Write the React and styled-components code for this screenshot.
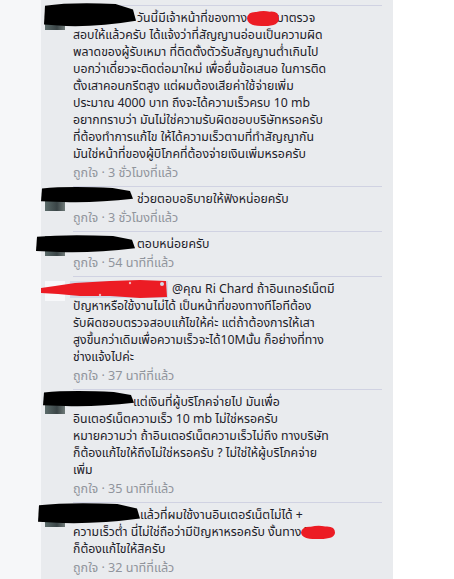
import React from "react";
import styled, { createGlobalStyle } from "styled-components";

const GlobalStyle = createGlobalStyle`
  html, body {
    margin: 0;
    padding: 0;
    background: #f6f7f9;
  }
  body {
    font-family: Tahoma, "Noto Sans Thai", "Noto Sans", "DejaVu Sans", sans-serif;
  }
`;

const Page = styled.div`
  display: flex;
  min-height: 579px;
`;

const Gutter = styled.div`
  width: 41px;
  flex-shrink: 0;
`;

const Panel = styled.div`
  width: 352px;
  flex-shrink: 0;
  background: #e9ebee;
  padding: 5px 11px 0 4px;
  box-sizing: border-box;
`;

const Blank = styled.div`
  flex: 1;
  background: #ffffff;
`;

const Comment = styled.div`
  position: relative;
  display: flex;
`;

const Avatar = styled.div`
  width: 20px;
  height: 20px;
  margin-top: 5px;
  margin-right: 8px;
  flex-shrink: 0;
  background: ${(p) => p.$bg || "linear-gradient(90deg, #5b6b6a, #3a4446 60%, #6f7a78)"};
`;

const Body = styled.div`
  flex: 1;
  border-top: 1px solid #d0d2e2;
  padding: 4px 0 4px;
  font-size: 12.3px;
  line-height: 17px;
  color: #1d2129;
  white-space: nowrap;
`;

const Line = styled.div``;

const Name = styled.span`
  display: inline-block;
  width: ${(p) => p.$w}px;
  height: 17px;
  vertical-align: top;
  margin-left: ${(p) => (p.$tag ? "-3px" : "0")};
  margin-right: 4px;
  background: ${(p) => (p.$tag ? "#d3d9e7" : "transparent")};
`;

const Hidden = styled.span`
  position: relative;
  display: inline-block;
`;

const Scribble = styled.svg`
  position: absolute;
  left: ${(p) => p.$x}px;
  top: ${(p) => p.$y}px;
  pointer-events: none;
`;

const Meta = styled.div`
  margin-top: 2px;
  font-size: 12.6px;
  color: #90949c;
`;

const BlackBlob = ({ x, y, w, h }) => (
  <Scribble $x={x} $y={y} width={w} height={h} viewBox={`0 0 ${w} ${h}`}>
    <path
      d={`M2 ${h * 0.15} Q${w * 0.3} 0 ${w * 0.78} 2 L${w - 3} ${h * 0.3} L${w} ${h * 0.75} Q${w * 0.6} ${h} ${w * 0.25} ${h - 1} L1 ${h * 0.9} Z`}
      fill="#000"
    />
  </Scribble>
);

const RedBlob = ({ x, y, w, h }) => (
  <Scribble $x={x} $y={y} width={w} height={h} viewBox={`0 0 ${w} ${h}`}>
    <path
      d={`M1 ${h * 0.5} Q${w * 0.05} ${h * 0.1} ${w * 0.3} ${h * 0.12} Q${w * 0.5} 0 ${w * 0.7} ${h * 0.1} Q${w - 1} ${h * 0.05} ${w - 1} ${h * 0.5} Q${w - 1} ${h - 1} ${w * 0.55} ${h - 1} Q${w * 0.05} ${h} 1 ${h * 0.5} Z`}
      fill="#ec1c24"
    />
  </Scribble>
);

const TagScribble = () => (
  <Scribble $x={-5} $y={3} width={128} height={20} viewBox="0 0 128 20">
    <path
      d="M1 9 L15 7 L35 4 L70 2 L100 1 L126 2 L127 18 L100 19 L70 17 L40 17 L18 15 L1 14 Z"
      fill="#ec1c24"
    />
    <circle cx="122" cy="5" r="2" fill="#d3d9e7" />
    <circle cx="60" cy="16" r="1.2" fill="#f2b6ba" />
    <circle cx="90" cy="4" r="1.2" fill="#f2b6ba" />
  </Scribble>
);

const Tot = ({ blob }) => (
  <Hidden>
    TOT
    <RedBlob {...blob} />
  </Hidden>
);

const comments = [
  {
    lines: [
      <>
        วันนี้มีเจ้าหน้าที่ของทาง <Tot blob={{ x: -4, y: 0, w: 34, h: 17 }} /> มาตรวจ
      </>,
      "สอบให้แล้วครับ ได้แจ้งว่าที่สัญญานอ่อนเป็นความผิด",
      "พลาดของผู้รับเหมา ที่ติดตั้งตัวรับสัญญานต่ำเกินไป",
      "บอกว่าเดี๋ยวจะติดต่อมาใหม่ เพื่อยื่นข้อเสนอ ในการติด",
      "ตั้งเสาคอนกรีตสูง แต่ผมต้องเสียค่าใช้จ่ายเพิ่ม",
      "ประมาณ 4000 บาท ถึงจะได้ความเร็วครบ 10 mb",
      "อยากทราบว่า มันไม่ใช่ความรับผิดชอบบริษัทหรอครับ",
      "ที่ต้องทำการแก้ไข ให้ได้ความเร็วตามที่ทำสัญญากัน",
      "มันใช่หน้าที่ของผู้บิโภคที่ต้องจ่ายเงินเพิ่มหรอครับ",
    ],
    nameW: 60,
    time: "3 ชั่วโมงที่แล้ว",
    black: { x: -2, y: -3, w: 93, h: 25 },
  },
  {
    lines: ["ช่วยตอบอธิบายให้ฟังหน่อยครับ"],
    nameW: 60,
    time: "3 ชั่วโมงที่แล้ว",
    black: { x: -5, y: 0, w: 93, h: 17 },
  },
  {
    lines: ["ตอบหน่อยครับ"],
    nameW: 60,
    time: "54 นาทีที่แล้ว",
    black: { x: -10, y: 3, w: 100, h: 19 },
  },
  {
    lines: [
      "@คุณ Ri Chard ถ้าอินเทอร์เน็ตมี",
      "ปัญหาหรือใช้งานไม่ได้ เป็นหน้าที่ของทางทีโอทีต้อง",
      "รับผิดชอบตรวจสอบแก้ไขให้ค่ะ แต่ถ้าต้องการให้เสา",
      "สูงขึ้นกว่าเดิมเพื่อความเร็วจะได้10Mนั้น ก็อย่างที่ทาง",
      "ช่างแจ้งไปค่ะ",
    ],
    nameW: 98,
    tag: true,
    avatar: "#f7f8fa",
    time: "37 นาทีที่แล้ว",
  },
  {
    lines: [
      "แต่เงินที่ผู้บริโภคจ่ายไป มันเพื่อ",
      "อินเตอร์เน็ตความเร็ว 10 mb ไม่ใช่หรอครับ",
      "หมายความว่า ถ้าอินเตอร์เน็ตความเร็วไม่ถึง ทางบริษัท",
      "ก็ต้องแก้ไขให้ถึงไม่ใช่หรอครับ ? ไม่ใช่ให้ผู้บริโภคจ่าย",
      "เพิ่ม",
    ],
    nameW: 56,
    time: "35 นาทีที่แล้ว",
    black: { x: -3, y: 1, w: 92, h: 17 },
  },
  {
    lines: [
      "แล้วที่ผมใช้งานอินเตอร์เน็ตไม่ได้ +",
      <>
        ความเร็วต่ำ นี่ไม่ใช่ถือว่ามีปัญหาหรอครับ งั้นทาง{" "}
        <Tot blob={{ x: -4, y: 1, w: 36, h: 15 }} />
      </>,
      "ก็ต้องแก้ไขให้สิครับ",
    ],
    nameW: 63,
    time: "32 นาทีที่แล้ว",
    black: { x: -8, y: 0, w: 103, h: 22 },
  },
];

const App = () => (
  <>
    <GlobalStyle />
    <Page>
      <Gutter />
      <Panel>
        {comments.map((c, i) => (
          <Comment key={i}>
            <Avatar $bg={c.avatar} />
            <Body>
              {c.lines.map((l, j) => (
                <Line key={j}>
                  {j === 0 && <Name $w={c.nameW} $tag={c.tag} />}
                  {l}
                </Line>
              ))}
              <Meta>ถูกใจ · {c.time}</Meta>
            </Body>
            {c.black && <BlackBlob {...c.black} />}
            {c.tag && <TagScribble />}
          </Comment>
        ))}
      </Panel>
      <Blank />
    </Page>
  </>
);

export default App;
